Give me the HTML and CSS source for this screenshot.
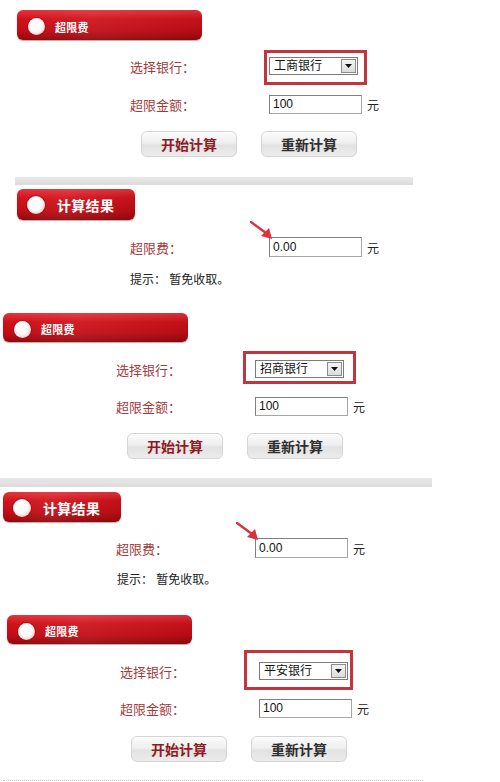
FILE: index.html
```html
<!DOCTYPE html>
<html lang="zh-CN">
<head>
<meta charset="utf-8">
<title>超限费计算</title>
<link rel="stylesheet" href="styles.css">
</head>
<body>
<main class="page">

  <section class="panel calc p1">
    <div class="hd hd-calc"><span class="dot"></span><span class="hd-t">超限费</span></div>
    <div class="row r-bank">
      <span class="lbl">选择银行：</span>
      <div class="sel">
        <span class="sel-t">工商银行</span>
        <span class="sel-btn"><svg width="7" height="4" viewBox="0 0 7 4"><path d="M0 0H7L3.5 4Z" fill="#111"/></svg></span>
        <span class="mark m1"></span>
      </div>
    </div>
    <div class="row r-amt a1">
      <span class="lbl">超限金额：</span>
      <div class="inp">100</div>
      <span class="unit">元</span>
    </div>
    <div class="btns b1">
      <button class="btn btn-go">开始计算</button>
      <button class="btn btn-reset">重新计算</button>
    </div>
  </section>

  <div class="divider dv1"></div>

  <section class="panel result p2">
    <div class="hd hd-res"><span class="dot"></span><span class="hd-t">计算结果</span></div>
    <div class="row r-res">
      <span class="lbl">超限费：</span>
      <div class="inp">0.00
        <svg class="pointer" width="26" height="22" viewBox="0 0 26 22"><path d="M2 3L17 14" stroke="#d8343c" stroke-width="2.4" stroke-linecap="round"/><path d="M12 17L23 20L20 9Z" fill="#d8343c"/></svg>
      </div>
      <span class="unit">元</span>
    </div>
    <p class="hint">提示： 暂免收取。</p>
  </section>

  <section class="panel calc p3">
    <div class="hd hd-calc"><span class="dot"></span><span class="hd-t">超限费</span></div>
    <div class="row r-bank">
      <span class="lbl">选择银行：</span>
      <div class="sel">
        <span class="sel-t">招商银行</span>
        <span class="sel-btn"><svg width="7" height="4" viewBox="0 0 7 4"><path d="M0 0H7L3.5 4Z" fill="#111"/></svg></span>
        <span class="mark m3"></span>
      </div>
    </div>
    <div class="row r-amt">
      <span class="lbl">超限金额：</span>
      <div class="inp">100</div>
      <span class="unit">元</span>
    </div>
    <div class="btns">
      <button class="btn btn-go">开始计算</button>
      <button class="btn btn-reset">重新计算</button>
    </div>
  </section>

  <div class="divider dv2"></div>

  <section class="panel result p4">
    <div class="hd hd-res"><span class="dot"></span><span class="hd-t">计算结果</span></div>
    <div class="row r-res">
      <span class="lbl">超限费：</span>
      <div class="inp">0.00
        <svg class="pointer" width="26" height="22" viewBox="0 0 26 22"><path d="M2 3L17 14" stroke="#d8343c" stroke-width="2.4" stroke-linecap="round"/><path d="M12 17L23 20L20 9Z" fill="#d8343c"/></svg>
      </div>
      <span class="unit">元</span>
    </div>
    <p class="hint">提示： 暂免收取。</p>
  </section>

  <section class="panel calc p5">
    <div class="hd hd-calc"><span class="dot"></span><span class="hd-t">超限费</span></div>
    <div class="row r-bank">
      <span class="lbl">选择银行：</span>
      <div class="sel">
        <span class="sel-t">平安银行</span>
        <span class="sel-btn"><svg width="7" height="4" viewBox="0 0 7 4"><path d="M0 0H7L3.5 4Z" fill="#111"/></svg></span>
        <span class="mark m5"></span>
      </div>
    </div>
    <div class="row r-amt">
      <span class="lbl">超限金额：</span>
      <div class="inp">100</div>
      <span class="unit">元</span>
    </div>
    <div class="btns b5">
      <button class="btn btn-go">开始计算</button>
      <button class="btn btn-reset">重新计算</button>
    </div>
  </section>

  <div class="dots"></div>
</main>
</body>
</html>
```
FILE: styles.css
```css
* { box-sizing: border-box; }
html, body { margin: 0; padding: 0; background: #fff; }
body {
  font-family: "Liberation Sans", "Noto Sans CJK SC", sans-serif;
  font-size: 12px;
  color: #222;
}
.page { width: 500px; height: 782px; overflow: hidden; }

/* panels */
.panel { display: flex; flex-direction: column; }
.p1 { margin: 10px 0 0 17px; }
.p2 { margin: 4px 0 0 17px; }
.p3 { margin: 25px 0 0 3px; }
.p4 { margin: 5px 0 0 3px; }
.p5 { margin: 27px 0 0 7px; }

/* red header bar */
.hd {
  display: flex;
  align-items: center;
  border-radius: 6px;
  background:
    linear-gradient(90deg, rgba(255,255,255,0) 0%, rgba(255,255,255,0.06) 40%, rgba(0,0,0,0.06) 100%),
    linear-gradient(180deg, #e4343b 0%, #d0121a 30%, #c00c14 70%, #a20a10 90%, #870a0d 100%);
  box-shadow: 0 1px 1px rgba(90,0,0,0.35);
  color: #fff;
}
.hd-calc { width: 185px; height: 30px; padding: 3px 0 0 11px; }
.p3 .hd-calc, .p5 .hd-calc { height: 29px; }
.hd-res { width: 118px; height: 31px; padding: 1px 0 0 10px; }
.p4 .hd-res { height: 30px; }
.dot {
  width: 17px;
  height: 17px;
  border-radius: 50%;
  flex: none;
  background: radial-gradient(circle at 45% 42%, #ffffff 0 40%, #fbe9e9 58%, #eeb5b5 82%, #d86e70 100%);
  box-shadow: 0 0 0 1px rgba(150,10,16,0.55);
}
.hd-calc .hd-t { margin-left: 10px; font-size: 11px; font-weight: 700; letter-spacing: 0.2px; }
.hd-res .hd-t { margin-left: 12px; font-size: 14px; font-weight: 700; letter-spacing: 0.3px; }
.hd-res .dot { width: 18px; height: 18px; }

/* form rows */
.row { display: flex; align-items: center; padding-left: 113px; }
.lbl {
  width: 139px;
  flex: none;
  color: #a33a3c;
  font-family: "Noto Sans CJK JP", "Noto Sans CJK SC", sans-serif;
  font-size: 13px;
}
.r-bank { margin-top: 17px; height: 18px; }
.p3 .r-bank, .p5 .r-bank { margin-top: 18px; }
.r-amt { margin-top: 19px; height: 19px; }
.a1 { margin-top: 20px; }

.sel {
  position: relative;
  width: 89px;
  height: 18px;
  border: 1px solid #7b7b7b;
  background: #fff;
  display: flex;
  align-items: center;
  justify-content: space-between;
}
.sel-t { padding-left: 4px; color: #111; font-size: 12px; line-height: 16px; }
.sel-btn {
  width: 15px;
  height: 14px;
  margin-right: 1px;
  border: 1px solid #8c8c8c;
  background: linear-gradient(180deg, #f4f4f4 0%, #dcdcdc 100%);
  display: flex;
  align-items: center;
  justify-content: center;
}
.mark { position: absolute; border: 3px solid #c1363d; pointer-events: none; }
.m1 { top: -8px; left: -6px; right: -10px; bottom: -11px; }
.m3 { top: -10px; left: -13px; right: -13px; bottom: -7px; }
.m5 { top: -13px; left: -16px; right: -6px; bottom: -11px; }

.inp {
  position: relative;
  width: 93px;
  height: 19px;
  border: 1px solid #7f7f7f;
  border-right-color: #a6a6a6;
  border-bottom-color: #a6a6a6;
  padding-left: 3px;
  line-height: 17px;
  font-size: 12px;
  color: #111;
  background: #fff;
}
.unit { margin-left: 5px; font-size: 12px; color: #222; }

/* buttons */
.btns { display: flex; gap: 24px; padding-left: 124px; margin-top: 17px; }
.b1 { margin-top: 17px; }
.b5 { margin-top: 18px; }
.btn {
  width: 96px;
  height: 26px;
  padding: 0;
  border: 1px solid #d4d4d4;
  border-radius: 6px;
  background: linear-gradient(180deg, #fbfbfb 0%, #efefef 45%, #e2e2e2 55%, #ececec 100%);
  box-shadow: inset 0 1px 0 #fff;
  font-family: "Noto Sans CJK SC", sans-serif;
  font-size: 14px;
  font-weight: 700;
  line-height: 24px;
}
.btn-go { color: #8e1b24; }
.btn-reset { color: #2e2e2e; }

/* result */
.r-res { margin-top: 17px; height: 20px; }
.r-res .inp { height: 20px; line-height: 18px; }
.p4 .r-res { margin-top: 16px; }
.pointer { position: absolute; left: -21px; top: -19px; }
.hint { margin: 15px 0 0 113px; font-size: 12px; line-height: 16px; color: #222; }
.p4 .hint { margin-top: 14px; margin-left: 114px; }

/* dividers */
.divider { background: linear-gradient(180deg, #e9e9e9, #dcdcdc); }
.dv1 { margin: 20px 0 0 15px; width: 398px; height: 8px; }
.dv2 { margin: 19px 0 0 0; width: 432px; height: 9px; }
.dots { margin: 18px 0 0 3px; width: 420px; border-top: 1px dotted #c8c8c8; }
```
